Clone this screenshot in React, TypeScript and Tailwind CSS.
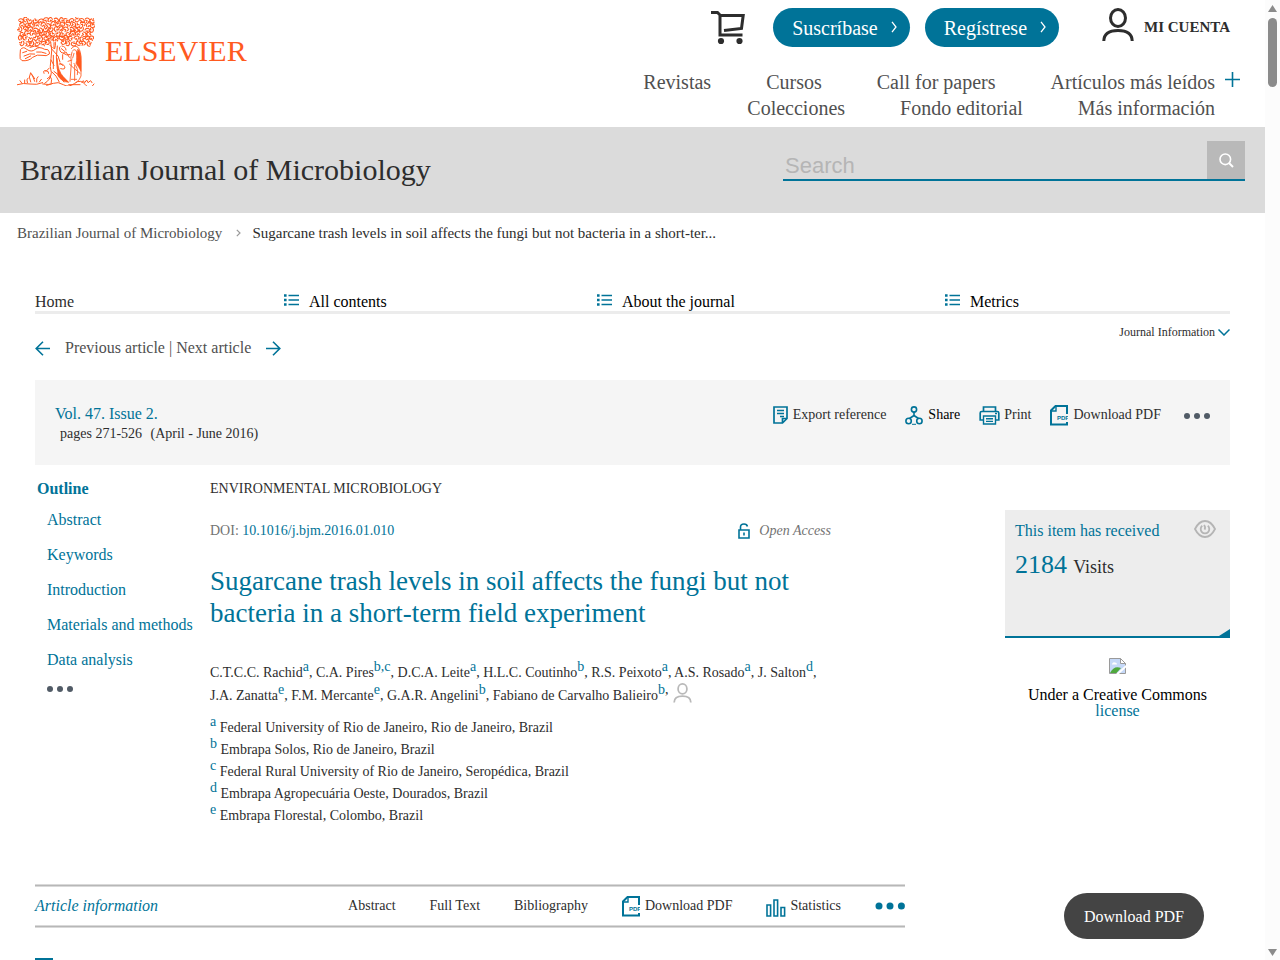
import type { ReactNode } from "react";

const TEAL = "#007398";

function leafStrokes() {
  const parts: string[] = [];
  let seed = 29;
  const rnd = () => {
    seed = (seed * 1103515245 + 12345) % 2147483648;
    return seed / 2147483648;
  };
  for (let row = 0; row < 6; row++) {
    for (let col = 0; col < 15; col++) {
      const x = 60 + col * 15.4 + (row % 2) * 5 + rnd() * 5 - 2;
      const y = 59 + row * 13.6 + rnd() * 6 - 1;
      if (x > 279) continue;
      if (row === 5 && (col === 6 || col === 7)) continue;
      const a = rnd() * 6.28;
      const p = (t: number, r: number) =>
        (x + Math.cos(a + t) * r).toFixed(1) + " " + (y + Math.sin(a + t) * r).toFixed(1);
      parts.push("M" + p(0, 7) + "Q" + p(0.9, 9) + " " + p(1.9, 6.5) + "T" + p(3.6, 6.5) + "M" + p(4.4, 7.5) + "L" + p(4.6, 1.5) + "L" + p(5.6, 5));
    }
  }
  return parts.join("");
}

const LEAVES = leafStrokes();

function TreeLogo() {
  return (
    <svg viewBox="51 51 234 207" className="h-[69px] w-[78px]" fill="none" stroke="#ff5a1f" strokeWidth="3" strokeLinecap="round" aria-hidden="true">
      <path d={LEAVES} strokeWidth="3.3" />
      <path d="M146 84Q148 104 160 124M190 78Q184 98 172 124M112 100Q132 98 152 126M228 104Q204 104 182 128" strokeWidth="2.2" />
      <path d="M152 126Q158 150 153 176T154 218Q152 240 134 250M166 126Q168 136 164 146M162 128V146M150 136L158 144M156 148L174 168L180 186M160 166V206M153 180L162 196M156 216Q170 226 178 246M150 228Q158 238 154 248M162 214Q178 222 192 246M142 236L152 228" />
      <path d="M62 148Q70 138 80 148Q94 158 106 148T134 148Q146 146 148 156V162Q140 170 126 166T98 172Q86 184 66 182Q58 178 60 166ZM68 158L80 154M72 168Q90 158 104 162M110 156Q124 154 138 160M76 176L92 168M90 142Q104 134 118 142" strokeWidth="3" />
      <path d="M172 138Q166 170 172 206Q178 226 204 246M180 140Q176 142 180 152T196 158M186 138Q198 140 198 150M184 146L194 154M190 160Q200 168 210 164M198 156L208 172M188 164V178" />
      <path d="M214 146Q222 134 234 142Q244 154 243 182V228Q240 240 228 248M218 152Q226 144 230 156Q232 166 230 178M216 156Q210 170 214 190L210 244M204 184L216 180M222 190Q236 204 232 224M224 196V242M208 192Q222 206 240 220M214 238H230M222 160L218 174" strokeWidth="2.6" />
      <path d="M234 148Q243 156 243 182V214Q236 200 228 190Q234 176 230 160ZM171 176Q174 214 190 230L206 247Q186 246 174 228Z" fill="#ff5a1f" strokeWidth="2" />
      <path d="M132 220Q128 210 138 212T146 220M138 214L148 204M178 192Q190 190 194 200T182 206M180 190L188 196" strokeWidth="3" />
      <path d="M52 254Q70 248 90 252T128 248M82 248Q78 238 84 234M92 246Q84 230 92 218Q100 230 104 244M96 224L104 236M110 246Q108 234 114 230M118 246L124 238M66 250L60 242M74 248V240" />
      <path d="M128 252Q146 256 160 250T190 254T224 250T256 254T282 252M246 248L250 242L254 248L260 240L264 248L272 242L276 248M140 256L154 252M206 254L240 254" />
    </svg>
  );
}

function Svg({ w, h, children, className = "", sw = 2, color = TEAL }: { w: number; h: number; children: ReactNode; className?: string; sw?: number; color?: string }) {
  return (
    <svg width={w} height={h} viewBox={`0 0 ${w} ${h}`} fill="none" stroke={color} strokeWidth={sw} className={"shrink-0 " + className} aria-hidden="true">
      {children}
    </svg>
  );
}

const Chevron = () => (
  <Svg w={6} h={12} sw={1.3} color="#fff" className="-mt-px"><path d="M1 .8L5 6L1 11.2" /></Svg>
);

const ListIcon = () => (
  <Svg w={15} h={12} sw={1.3} className="mb-[5px]">
    <path d="M4.5 1.5H15M4.5 6H15M4.5 10.5H15" />
    <path d="M0 1.5H2.6M0 6H2.6M0 10.5H2.6" strokeWidth={2.4} />
  </Svg>
);

const PdfIcon = () => (
  <Svg w={18} h={22}>
    <path d="M17 10V2H5.5L1 6.5V20.5H17V18" />
    <path d="M1.5 7H6V2.5" strokeWidth={1.4} />
    <text x="7" y="16" fontSize="6" fontWeight="bold" fontFamily="Liberation Sans" fill={TEAL} stroke="none">PDF</text>
  </Svg>
);

function Dots({ color }: { color: string }) {
  return (
    <Svg w={26} h={6} sw={0}>
      <g fill={color}><circle cx="3" cy="3" r="3" /><circle cx="13" cy="3" r="3" /><circle cx="23" cy="3" r="3" /></g>
    </Svg>
  );
}

const Person = ({ w, h, color, sw }: { w: number; h: number; color: string; sw: number }) => (
  <svg width={w} height={h} viewBox="0 0 32 34" fill="none" stroke={color} strokeWidth={sw} className="inline-block shrink-0" aria-hidden="true">
    <ellipse cx="16" cy="10" rx="7.5" ry="8.5" />
    <path d="M1.8 33C2 25 8 22.5 16 22.5S30 25 30.2 33" />
  </svg>
);

function Header() {
  return (
    <header className="flex h-[127px] justify-between">
      <a href="#" className="flex items-start pl-[17px] pt-[17px] text-[30px] leading-[34px] text-[#ff5a1f]" aria-label="Elsevier">
        <TreeLogo />
        <span className="ml-[10px] mt-[17px]">ELSEVIER</span>
      </a>
      <div className="flex flex-col pt-2">
        <div className="flex items-center justify-end pr-[35px]">
          <a href="#" aria-label="Carrito" className="mr-7">
            <Svg w={34} h={34} color="#2d2d2d" sw={3}>
              <path d="M0 1.5H6.5L9 4V24H31.5M9 4.5H32.2L30.5 17.5L13 19.5" />
              <circle cx="10" cy="30" r="3.1" fill="#2d2d2d" stroke="none" /><circle cx="28.5" cy="30" r="3.1" fill="#2d2d2d" stroke="none" />
            </Svg>
          </a>
          <button className="flex h-[39px] items-center gap-[13px] rounded-full bg-[#007398] pl-[19px] pr-[13px] text-xl text-white">Suscríbase<Chevron /></button>
          <button className="ml-[15px] flex h-[39px] items-center gap-[13px] rounded-full bg-[#007398] pl-[19px] pr-[13px] text-xl text-white">Regístrese<Chevron /></button>
          <a href="#" className="ml-[43px] flex items-center gap-[10px] text-[15px] font-bold text-[#2d2d2d]"><span className="-mt-[6px]"><Person w={32} h={34} color="#2d2d2d" sw={3} /></span>MI CUENTA</a>
        </div>
        <div className="mt-[22px] flex items-start gap-[10px] pr-[25px] text-xl leading-[26px] text-[#505050]">
          <nav className="flex w-[600px] flex-wrap justify-end gap-x-[55px]">
            <a href="#">Revistas</a><a href="#">Cursos</a><a href="#">Call for papers</a><a href="#">Artículos más leídos</a>
            <a href="#">Colecciones</a><a href="#">Fondo editorial</a><a href="#">Más información</a>
          </nav>
          <button aria-label="Más" className="mt-[3px]"><Svg w={15} h={15} sw={1.6}><path d="M0 7.5H15M7.5 0V15" /></Svg></button>
        </div>
      </div>
    </header>
  );
}

function JournalBar() {
  return (
    <div className="flex h-[86px] items-start justify-between bg-[#dbdbdb] pl-5 pr-5 pt-[14px]">
      <h2 className="pt-[10px] text-[30px] leading-[38px] text-[#2d2d2d]">Brazilian Journal of Microbiology</h2>
      <form className="flex h-10 w-[462px] border-b-2 border-[#007398]">
        <input type="text" aria-label="Search" placeholder="Search" className="min-w-0 flex-1 bg-transparent px-[2px] pt-[11px] font-['Liberation_Sans',Arial,sans-serif] text-[22px] leading-[26px] outline-none placeholder:text-[#b5b5b5]" />
        <button type="button" aria-label="Search" className="flex w-[38px] items-center justify-center bg-[#b9b9b9]">
          <Svg w={15} h={15} sw={1.6} color="#fff"><circle cx="6.3" cy="6.3" r="5.3" /><path d="M10 10L14 14" strokeWidth={2} /></Svg>
        </button>
      </form>
    </div>
  );
}

const action = "flex items-center text-sm text-[#2d2d2d]";

function IssuePanel() {
  return (
    <section className="flex h-[85px] justify-between bg-[#f5f5f5] pl-5 pr-5 pt-6">
      <div className="leading-5">
        <a href="#" className="block text-base leading-5 text-[#007398]">Vol. 47. Issue 2.</a>
        <p className="pl-[5px] text-sm leading-[19px] text-[#2d2d2d]">pages 271-526 <span className="pl-[5px]">(April - June 2016)</span></p>
      </div>
      <div className="flex h-[22px] items-center gap-[19px]">
        <a href="#" className={action + " gap-[5px]"}>
          <Svg w={15} h={18} sw={1.7}><path d="M1 1H14V12.5L9.5 17H1ZM9.5 17V12.5H14" /><path d="M4 4.5H11M4 7.5H11M7 10.5H11" strokeWidth={1.3} /></Svg>
          Export reference
        </a>
        <button className="flex items-center gap-[5px] text-sm text-black">
          <Svg w={18} h={19} sw={1.6}><circle cx="9" cy="3.5" r="2.6" /><circle cx="3.6" cy="15" r="2.7" /><circle cx="14.4" cy="15" r="2.7" /><path d="M9 6V9.5L4.5 12.5M9 9.5L13.5 12.5" /><path d="M7 18.3H11" strokeWidth={1} /></Svg>
          Share
        </button>
        <button className={action + " gap-1"}>
          <Svg w={21} h={19} sw={1.7}><path d="M4.5 5V1H16.5V5M4.5 14H1.2V7Q1.2 5.5 2.7 5.5H18.3Q19.8 5.5 19.8 7V14H16.5" /><path d="M4.5 10H16.5V18H4.5ZM7 12.8H14M7 15.4H14M16 7.5H18" strokeWidth={1.4} /></Svg>
          Print
        </button>
        <a href="#" className={action + " gap-[5px]"}><PdfIcon />Download PDF</a>
        <button aria-label="More actions" className="ml-1 mt-[2px]"><Dots color="#515b66" /></button>
      </div>
    </section>
  );
}

const authors: [string, string][] = [
  ["C.T.C.C. Rachid", "a"], ["C.A. Pires", "b,c"], ["D.C.A. Leite", "a"], ["H.L.C. Coutinho", "b"], ["R.S. Peixoto", "a"], ["A.S. Rosado", "a"], ["J. Salton", "d"],
  ["J.A. Zanatta", "e"], ["F.M. Mercante", "e"], ["G.A.R. Angelini", "b"],
];

const affiliations = [
  ["a", "Federal University of Rio de Janeiro, Rio de Janeiro, Brazil"],
  ["b", "Embrapa Solos, Rio de Janeiro, Brazil"],
  ["c", "Federal Rural University of Rio de Janeiro, Seropédica, Brazil"],
  ["d", "Embrapa Agropecuária Oeste, Dourados, Brazil"],
  ["e", "Embrapa Florestal, Colombo, Brazil"],
];

const Sup = ({ children }: { children: ReactNode }) => (
  <sup className="static align-super text-[14px] leading-0 text-[#007398]">{children}</sup>
);

function Article() {
  return (
    <article className="min-w-0 flex-1 pr-[74px] pt-[14px] text-sm text-[#2d2d2d]">
      <p>ENVIRONMENTAL MICROBIOLOGY</p>
      <div className="mt-[22px] flex items-center justify-between">
        <p className="text-[#737373]">DOI: <a href="#" className="text-[#007398]">10.1016/j.bjm.2016.01.010</a></p>
        <p className="flex items-center gap-[9px] italic text-[#737373]">
          <Svg w={12} h={16} sw={1.6}><path d="M1 7H11V15H1ZM2.5 7V4Q2.5 1 6 1Q9 1 9.4 3.5M6 9.5V12.5" /></Svg>
          Open Access
        </p>
      </div>
      <h1 className="mt-6 text-[27px] leading-8 text-[#007398]">Sugarcane trash levels in soil affects the fungi but not bacteria in a short-term field experiment</h1>
      <p className="mt-8 leading-[23px]">
        {authors.map(([name, mark]) => (
          <span key={name}>{name}<Sup>{mark}</Sup>, </span>
        ))}
        Fabiano de Carvalho Balieiro<Sup>b</Sup><sup className="static align-super text-[14px] leading-0">,</sup>{" "}
        <a href="#" aria-label="Corresponding author" className="inline-flex h-3 items-end pl-px align-middle"><Person w={19} h={20} color="#b9b9b9" sw={3} /></a>
      </p>
      <ul className="mt-[10px]">
        {affiliations.map(([mark, text]) => (
          <li key={mark} className="leading-[22px]"><Sup>{mark}</Sup> {text}</li>
        ))}
      </ul>
    </article>
  );
}

function Outline() {
  return (
    <nav className="w-[175px] shrink-0 pt-3 text-base text-[#007398]">
      <h3 className="pl-[2px] font-bold">Outline</h3>
      <ul className="mt-px whitespace-nowrap pl-3 leading-[35px]">
        {["Abstract", "Keywords", "Introduction", "Materials and methods", "Data analysis"].map((t) => (
          <li key={t}><a href="#">{t}</a></li>
        ))}
      </ul>
      <button aria-label="More sections" className="ml-3 mt-[9px] flex"><Dots color="#515b66" /></button>
    </nav>
  );
}

function Toolbar() {
  return (
    <div className="mt-[57px]">
      <div className="h-[3px] border-y border-[#d9d9d9] bg-[#b7b7b7]" />
      <div className="flex h-[38px] items-center justify-between">
        <span className="text-base italic text-[#007398]">Article information</span>
        <div className="flex items-center gap-[34px] text-sm text-[#2d2d2d]">
          <a href="#">Abstract</a><a href="#">Full Text</a><a href="#">Bibliography</a>
          <a href="#" className="flex items-center gap-[5px]"><PdfIcon />Download PDF</a>
          <a href="#" className="flex items-center gap-1">
            <Svg w={20} h={18} sw={1.6} className="mt-[3px]"><path d="M1 6H4.6V17H1ZM8 1H11.6V17H8ZM15 8.5H18.6V17H15Z" /></Svg>
            Statistics
          </a>
          <button aria-label="More"><svg width="30" height="8" viewBox="0 0 30 8" fill={TEAL} aria-hidden="true"><circle cx="4" cy="4" r="3.5" /><circle cx="15" cy="4" r="3.5" /><circle cx="26.4" cy="4" r="3.5" /></svg></button>
        </div>
      </div>
      <div className="h-[3px] border-y border-[#d9d9d9] bg-[#b7b7b7]" />
    </div>
  );
}

function Sidebar() {
  return (
    <aside className="ml-[100px] w-[225px] shrink-0 pt-[45px] text-center text-base leading-4 text-black">
      <div className="relative h-32 border-b-2 border-[#007398] bg-[#ededed] px-[10px] pt-[10px] text-left">
        <div className="flex items-start justify-between leading-[22px] text-[#007398]">
          <span>This item has received</span>
          <Svg w={22} h={18} sw={1.8} color="#b5b5b5" className="mr-1"><path d="M1 9Q5 1 11 1T21 9Q17 17 11 17T1 9Z" /><path d="M8.2 5.8A4.3 4.3 0 1 0 13.8 5.8M10 5Q11.8 7 10.6 9.6" /></Svg>
        </div>
        <p className="mt-2 text-lg leading-[30px] text-[#2d2d2d]"><span className="mr-[2px] text-[26px] text-[#007398]">2184</span> Visits</p>
        <svg width="11" height="7" viewBox="0 0 11 7" className="absolute bottom-0 right-0" aria-hidden="true"><path d="M11 0V7H0Z" fill={TEAL} /></svg>
      </div>
      <svg width="17" height="16" viewBox="0 0 17 16" className="mx-auto mt-5" aria-hidden="true">
        <path d="M.5 .5H11.5L16.5 5.5V15.5H.5Z" fill="#c6d9f8" stroke="#9a9a9a" />
        <path d="M11.5 .5V5.5H16.5Z" fill="#fff" stroke="#9a9a9a" />
        <path d="M3 6Q4 3.5 6 4.5Q8 4.5 8 6.5H3Z" fill="#fff" />
        <path d="M1 15Q5 7 12 10L7.5 15Z" fill="#4fa83d" />
        <path d="M7 16L17 7V9.5L10 16Z" fill="#fff" />
      </svg>
      <p className="mt-[13px]">Under a Creative Commons <a href="#" className="text-[#007398]">license</a></p>
    </aside>
  );
}

function Scrollbar() {
  return (
    <div className="sticky top-0 flex h-screen w-[15px] shrink-0 flex-col items-center bg-[#fcfcfc] pb-1 pt-[5px]" aria-hidden="true">
      <svg width="9" height="7" viewBox="0 0 9 7"><path d="M4.5 0L9 7H0Z" fill="#8b8b8b" /></svg>
      <div className="mt-[6px] h-[69px] w-[9px] rounded-full bg-[#8b8b8b]" />
      <svg width="9" height="7" viewBox="0 0 9 7" className="mt-auto"><path d="M0 0H9L4.5 7Z" fill="#8b8b8b" /></svg>
    </div>
  );
}

export default function App() {
  return (
    <div className="flex min-h-screen bg-white font-['Liberation_Serif','Times_New_Roman',serif]">
      <div className="min-w-0 flex-1">
        <Header />
        <JournalBar />
        <nav className="flex items-center pl-[17px] pt-[10px] text-[15px] leading-5 text-[#2d2d2d]">
          <a href="#" className="text-[#505050]">Brazilian Journal of Microbiology</a>
          <Svg w={5} h={8} sw={1.2} color="#999" className="ml-[14px] mr-[11px]"><path d="M.8 .8L4 4L.8 7.2" /></Svg>
          <span>Sugarcane trash levels in soil affects the fungi but not bacteria in a short-ter...</span>
        </nav>
        <main className="px-[35px] pt-[50px]">
          <nav className="grid grid-cols-[249fr_313fr_348fr_285fr] border-b-[3px] border-[#ececec] text-base leading-[18px] text-black">
            <a href="#" className="text-[#2d2d2d]">Home</a>
            {["All contents", "About the journal", "Metrics"].map((t) => (
              <button key={t} className="flex items-center gap-[10px]"><ListIcon />{t}</button>
            ))}
          </nav>
          <div className="flex items-start justify-between pb-[22px] pt-[9px] text-[#505050]">
            <div className="flex items-center pt-[15px] text-base leading-5">
              <Svg w={15} h={15} sw={1.6} className="mr-[15px]"><path d="M1 7.5H15M8 .7L1.2 7.5L8 14.3" /></Svg>
              <a href="#">Previous article</a><span className="px-1">|</span><a href="#">Next article</a>
              <Svg w={15} h={15} sw={1.6} className="ml-[15px]"><path d="M0 7.5H14M7 .7L13.8 7.5L7 14.3" /></Svg>
            </div>
            <button className="flex items-center gap-[3px] text-xs leading-[18px] text-[#2d2d2d]">Journal Information<Svg w={12} h={7} sw={1.5}><path d="M.5 .5L6 6L11.5 .5" /></Svg></button>
          </div>
          <IssuePanel />
          <div className="flex">
            <div className="min-w-0 flex-1">
              <div className="flex"><Outline /><Article /></div>
              <Toolbar />
              <div className="mt-[30px] h-[2px] w-[18px] bg-[#007398]" />
            </div>
            <Sidebar />
          </div>
        </main>
      </div>
      <a href="#" className="fixed bottom-[21px] right-[76px] flex h-[46px] items-center rounded-[23px] bg-[#444] px-5 pt-px text-base text-white">Download PDF</a>
      <Scrollbar />
    </div>
  );
}
